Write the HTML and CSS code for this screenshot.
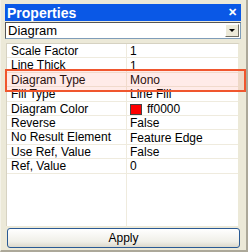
FILE: index.html
```html
<!DOCTYPE html>
<html lang="en">
<head>
    <meta charset="UTF-8">
    <title>Properties</title>
    <link rel="stylesheet" href="styles.css">
</head>
<body>
    <div class="panel">
        <div class="title-bar">
            <span class="title">Properties</span>
            <span class="close">&#x2715;</span>
        </div>

        <div class="combo">
            <span class="combo-text">Diagram</span>
            <span class="combo-btn"><span class="arrow"></span></span>
        </div>

        <div class="grid">
            <div class="row"><div class="name">Scale Factor</div><div class="value">1</div></div>
            <div class="row"><div class="name">Line Thick</div><div class="value">1</div></div>
            <div class="row"><div class="name">Diagram Type</div><div class="value">Mono</div></div>
            <div class="row"><div class="name">Fill Type</div><div class="value">Line Fill</div></div>
            <div class="row"><div class="name">Diagram Color</div><div class="value"><span class="swatch"></span>ff0000</div></div>
            <div class="row"><div class="name">Reverse</div><div class="value">False</div></div>
            <div class="row"><div class="name">No Result Element</div><div class="value">Feature Edge</div></div>
            <div class="row"><div class="name">Use Ref, Value</div><div class="value">False</div></div>
            <div class="row"><div class="name">Ref, Value</div><div class="value">0</div></div>
            <div class="filler"><div class="name"></div><div class="value"></div></div>
        </div>

        <button class="apply">Apply</button>

        <div class="highlight"></div>
    </div>
</body>
</html>
```

FILE: styles.css
```css
body {
    margin: 0;
    font-family: "Liberation Sans", Arial, sans-serif;
    font-size: 12px;
    color: #000;
    background-color: #ece9d8;
}
.panel {
    position: relative;
    width: 248px;
    height: 252px;
    box-sizing: border-box;
    padding: 4px 5px 0 4px;
    background-color: #ece9d8;
    border-left: 1px solid #f4f2e8;
    border-right: 2px solid #aca899;
    border-bottom: 2px solid #aca899;
    display: flex;
    flex-direction: column;
}
.title-bar {
    height: 17px;
    background-color: #0a58e6;
    color: white;
    display: flex;
    align-items: center;
    justify-content: space-between;
    padding: 0 4px 0 2px;
}
.title {
    font-weight: bold;
    font-size: 14px;
}
.close {
    font-size: 11px;
    font-weight: bold;
}
.combo {
    height: 17px;
    box-sizing: border-box;
    margin-top: 1px;
    background-color: white;
    border: 1px solid #7f9db9;
    border-left-color: #555;
    border-top-color: #555;
    display: flex;
    align-items: center;
    justify-content: space-between;
}
.combo-text {
    padding-left: 2px;
    font-size: 13px;
}
.combo-btn {
    width: 14px;
    height: 13px;
    margin-right: 1px;
    background-color: #ece9d8;
    border: 1px solid #fff;
    border-right-color: #716f64;
    border-bottom-color: #716f64;
    box-sizing: border-box;
    display: flex;
    align-items: center;
    justify-content: center;
}
.arrow {
    width: 0;
    height: 0;
    border-left: 3px solid transparent;
    border-right: 3px solid transparent;
    border-top: 3px solid #000;
}
.grid {
    margin-top: 4px;
    height: 182px;
    background-color: white;
    border-left: 1px solid #d6d2c2;
    border-top: 1px solid #d6d2c2;
    border-right: 2px solid #ece9d8;
    margin-left: 1px;
    margin-right: 1px;
    display: flex;
    flex-direction: column;
}
.row {
    display: flex;
    height: 14.4px;
    box-sizing: border-box;
    border-bottom: 1px solid #efebde;
    line-height: 15px;
}
.filler {
    display: flex;
    flex: 1;
}
.name {
    width: 115px;
    padding-left: 4px;
    border-right: 1px solid #efebde;
    white-space: nowrap;
}
.value {
    flex: 1;
    padding-left: 3px;
    display: flex;
    align-items: center;
    padding-top: 2px;
}
.swatch {
    width: 10px;
    height: 9px;
    background-color: #ff0000;
    border: 1px solid #444;
    margin-right: 5px;
}
.apply {
    margin: 2px 1px 0 2px;
    height: 20px;
    font-family: "Liberation Sans", Arial, sans-serif;
    font-size: 12px;
    color: #000;
    border: 1px solid #2a5a94;
    border-radius: 3px;
    background: linear-gradient(#ffffff, #f0efe8 70%, #dcd9cc);
    padding: 0;
}
.highlight {
    position: absolute;
    left: 4px;
    top: 69px;
    width: 237px;
    height: 19px;
    border: 2px solid #f0562e;
    background-color: rgba(255, 120, 100, 0.15);
}
```
